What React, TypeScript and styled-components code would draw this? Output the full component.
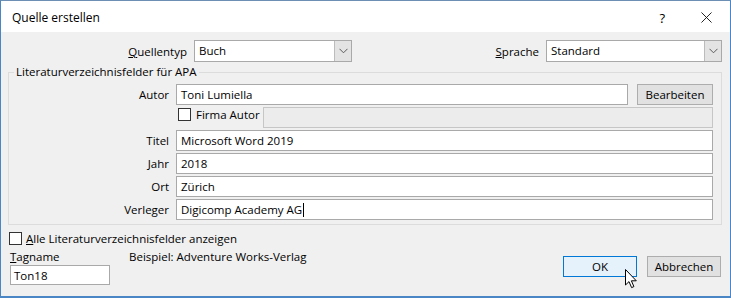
import React from 'react';
import styled, { createGlobalStyle } from 'styled-components';

const FONT = `'Open Sans', 'Noto Sans', sans-serif`;

const GlobalStyle = createGlobalStyle`
  html, body {
    margin: 0;
    padding: 0;
    background: #ffffff;
  }
  * {
    box-sizing: border-box;
  }
`;

const App: React.FC = () => {
  return (
    <>
      <GlobalStyle />
      <Window>
        <TitleBar>
          <Title>Quelle erstellen</Title>
          <TitleButtons>
            <HelpMark>?</HelpMark>
            <CloseMark viewBox="0 0 12 12">
              <path d="M0.5 0.5 L11.5 11.5 M11.5 0.5 L0.5 11.5" stroke="#111" strokeWidth="1" />
            </CloseMark>
          </TitleButtons>
        </TitleBar>
        <Body>
          <TopRow>
            <TopLabel width={186}>
              <u>Q</u>uellentyp
            </TopLabel>
            <Select width={158}>
              <SelectText>Buch</SelectText>
              <SelectArrow>
                <Chevron />
              </SelectArrow>
            </Select>
            <TopLabel width={194}>
              <u>S</u>prache
            </TopLabel>
            <Select width={176}>
              <SelectText>Standard</SelectText>
              <SelectArrow>
                <Chevron />
              </SelectArrow>
            </Select>
          </TopRow>

          <Group>
            <Legend>Literaturverzeichnisfelder für APA</Legend>
            <FieldGrid>
              <FieldLabel>Autor</FieldLabel>
              <FieldLine>
                <TextBox>Toni Lumiella</TextBox>
                <Button width={76}>Bearbeiten</Button>
              </FieldLine>

              <span />
              <FieldLine>
                <CheckRow>
                  <CheckBox />
                  <CheckText>Firma Autor</CheckText>
                </CheckRow>
                <TextBox disabled />
              </FieldLine>

              {FIELDS.map((field) => (
                <React.Fragment key={field.label}>
                  <FieldLabel>{field.label}</FieldLabel>
                  <TextBox>
                    {field.value}
                    {field.caret && <Caret />}
                  </TextBox>
                </React.Fragment>
              ))}
            </FieldGrid>
          </Group>

          <ShowAllRow>
            <CheckBox />
            <CheckText>
              <u>A</u>lle Literaturverzeichnisfelder anzeigen
            </CheckText>
          </ShowAllRow>

          <BottomRow>
            <TagColumn>
              <PlainText>
                <u>T</u>agname
              </PlainText>
              <TagBox>Ton18</TagBox>
            </TagColumn>
            <ExampleText>Beispiel: Adventure Works-Verlag</ExampleText>
            <ButtonBar>
              <Button width={74} primary>
                OK
                <Pointer viewBox="0 0 13 21">
                  <path
                    d="M0.5 0.5 L0.5 16 L4 12.6 L6.6 18.6 L8.9 17.6 L6.4 11.8 L11.3 11.8 Z"
                    fill="#fff"
                    stroke="#000"
                    strokeWidth="1"
                    strokeLinejoin="round"
                  />
                </Pointer>
              </Button>
              <Button width={74}>Abbrechen</Button>
            </ButtonBar>
          </BottomRow>
        </Body>
      </Window>
    </>
  );
};

const Chevron: React.FC = () => (
  <svg width="9" height="6" viewBox="0 0 9 6">
    <path d="M0.5 0.8 L4.5 4.8 L8.5 0.8" fill="none" stroke="#5a5a5a" strokeWidth="1" />
  </svg>
);

const Window = styled.div`
  width: 731px;
  height: 298px;
  display: flex;
  flex-direction: column;
  border: 1px solid #4a86c5;
  border-top-color: #6d8fb3;
  border-bottom: 2px solid #4a86c5;
  background: #f0f0f0;
  font-family: ${FONT};
  font-size: 11.5px;
  color: #000;
  overflow: hidden;
`;

const TitleBar = styled.div`
  height: 31px;
  flex: none;
  display: flex;
  align-items: center;
  justify-content: space-between;
  padding: 0 0 0 11px;
  background: #ffffff;
`;

const Title = styled.div`
  font-size: 12px;
  padding-top: 2px;
`;

const TitleButtons = styled.div`
  display: flex;
  align-items: center;
  gap: 36px;
  padding-right: 18px;
  padding-top: 2px;
`;

const HelpMark = styled.span`
  font-size: 13px;
`;

const CloseMark = styled.svg`
  width: 11px;
  height: 11px;
`;

const Body = styled.div`
  flex: 1;
  display: flex;
  flex-direction: column;
  padding: 8px 7px 0 7px;
`;

const TopRow = styled.div`
  display: flex;
  align-items: center;
  height: 22px;
`;

const TopLabel = styled.div<{ width: number }>`
  width: ${({ width }) => width}px;
  text-align: right;
  padding-right: 7px;
  flex: none;
`;

const Select = styled.div<{ width: number }>`
  width: ${({ width }) => width}px;
  height: 22px;
  flex: none;
  display: flex;
  border: 1px solid #a9a9a9;
  background: #ffffff;
`;

const SelectText = styled.div`
  flex: 1;
  padding-left: 4px;
  line-height: 20px;
`;

const SelectArrow = styled.div`
  width: 17px;
  display: flex;
  align-items: center;
  justify-content: center;
  background: #e3e3e3;
  border-left: 1px solid #bcbcbc;
`;

const Group = styled.fieldset`
  margin: 2px 0 0 0;
  width: 714px;
  padding: 4px 8px 4px 0;
  border: 1px solid #dcdcdc;
  border-radius: 0;
`;

const Legend = styled.legend`
  margin-left: 5px;
  padding: 0 2px;
  line-height: 16px;
`;

const FieldGrid = styled.div`
  display: grid;
  grid-template-columns: 160px 1fr;
  column-gap: 7px;
  row-gap: 2px;
  align-items: center;
`;

const FieldLabel = styled.div`
  text-align: right;
`;

const FieldLine = styled.div`
  display: flex;
  align-items: flex-start;
  gap: 9px;
`;

const TextBox = styled.div<{ disabled?: boolean }>`
  flex: 1;
  height: 21px;
  display: flex;
  align-items: center;
  padding-left: 4px;
  border: 1px solid ${({ disabled }) => (disabled ? '#c6c6c6' : '#a9a9a9')};
  background: ${({ disabled }) => (disabled ? '#ececec' : '#ffffff')};
`;

const Caret = styled.span`
  width: 1px;
  height: 14px;
  margin-left: 1px;
  background: #000;
`;

const CheckRow = styled.div`
  display: flex;
  align-items: center;
  gap: 5px;
  padding-left: 2px;
  width: 78px;
  height: 14px;
  flex: none;
`;

const CheckBox = styled.span`
  width: 13px;
  height: 13px;
  flex: none;
  border: 1px solid #333333;
  background: #ffffff;
`;

const CheckText = styled.span`
  white-space: nowrap;
`;

const Button = styled.div<{ width: number; primary?: boolean }>`
  position: relative;
  width: ${({ width }) => width}px;
  height: 21px;
  flex: none;
  display: flex;
  align-items: center;
  justify-content: center;
  background: ${({ primary }) => (primary ? '#e5f1fb' : '#e1e1e1')};
  border: 1px solid ${({ primary }) => (primary ? '#0078d7' : '#adadad')};
`;

const Pointer = styled.svg`
  position: absolute;
  left: 61px;
  top: 12px;
  width: 13px;
  height: 21px;
`;

const ShowAllRow = styled.div`
  display: flex;
  align-items: center;
  gap: 4px;
  margin: 5px 0 0 1px;
  height: 16px;
`;

const BottomRow = styled.div`
  display: flex;
  align-items: flex-start;
  margin-top: 3px;
`;

const TagColumn = styled.div`
  width: 121px;
  display: flex;
  flex-direction: column;
  padding-left: 2px;
`;

const PlainText = styled.div`
  line-height: 16px;
`;

const TagBox = styled.div`
  width: 100px;
  height: 20px;
  display: flex;
  align-items: center;
  padding-left: 3px;
  border: 1px solid #a9a9a9;
  background: #ffffff;
`;

const ExampleText = styled.div`
  flex: 1;
  line-height: 16px;
`;

const ButtonBar = styled.div`
  display: flex;
  gap: 10px;
  padding-top: 7px;
  padding-right: 2px;
`;

export default App;

const FIELDS: Array<{ label: string; value: string; caret?: boolean }> = [
  { label: 'Titel', value: 'Microsoft Word 2019' },
  { label: 'Jahr', value: '2018' },
  { label: 'Ort', value: 'Zürich' },
  { label: 'Verleger', value: 'Digicomp Academy AG', caret: true },
];
